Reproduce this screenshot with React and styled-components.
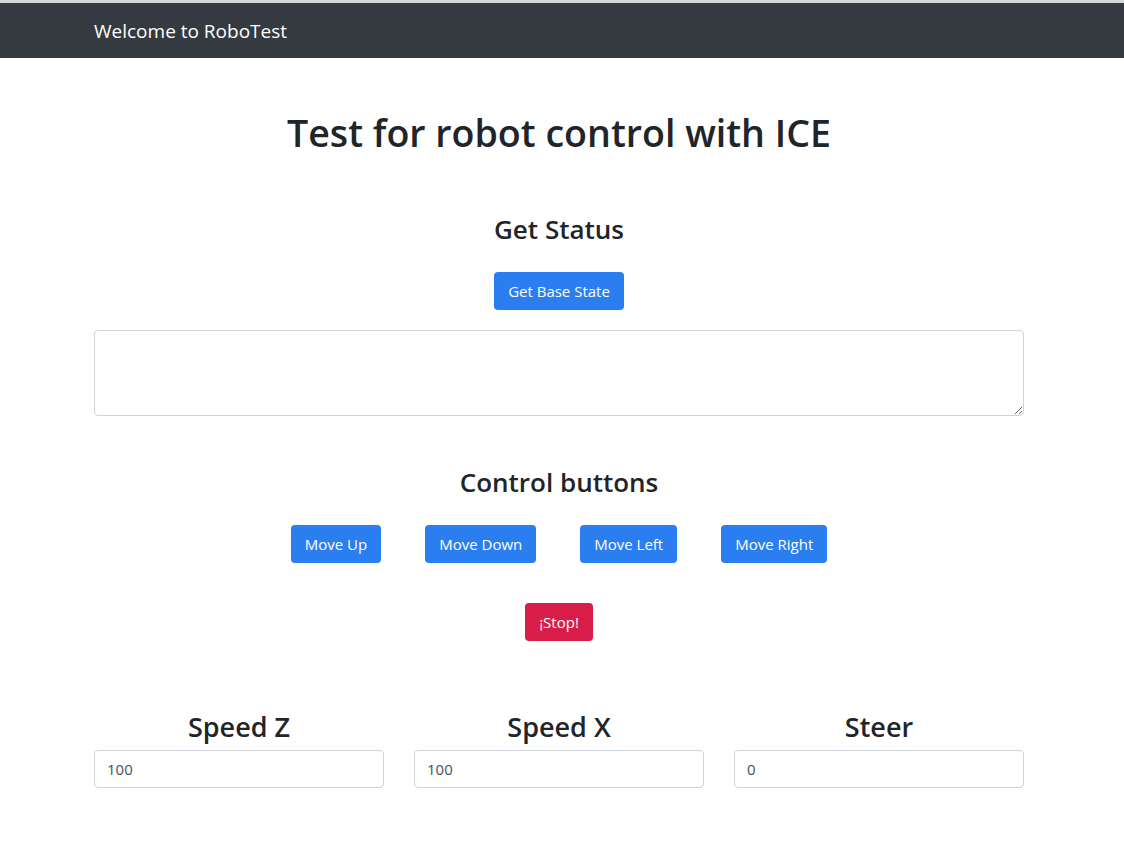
import React from "react";
import styled, { createGlobalStyle } from "styled-components";

const Global = createGlobalStyle`
  html, body { margin: 0; padding: 0; background: #fff; }
  body {
    font-family: "Open Sans", "Noto Sans", sans-serif;
    color: #212529;
    font-size: 16px;
    line-height: 1.5;
  }
  * { box-sizing: border-box; }
`;

const Navbar = styled.nav`
  background: #343a40;
  border-top: 3px solid #d4d6d8;
  height: 58px;
  display: flex;
  align-items: center;
`;

const Container = styled.div`
  width: 930px;
  margin: 0 calc(50% - 462px) 0 calc(50% - 468px);
`;

const Brand = styled.span`
  color: #fff;
  font-size: 19px;
  line-height: 30px;
`;

const Main = styled(Container)`
  padding-top: 51px;
  padding-bottom: 60px;
  display: flex;
  flex-direction: column;
  align-items: center;
`;

const Title = styled.h1`
  margin: 0;
  font-size: 37.6px;
  font-weight: 600;
  line-height: 48px;
  text-align: center;
`;

const Heading = styled.h3`
  margin: ${(p) => p.$mt || 0}px 0 0;
  font-size: ${(p) => p.$size || 26}px;
  font-weight: 600;
  line-height: 34px;
  text-align: center;
`;

const Button = styled.button`
  font-family: inherit;
  font-size: 15px;
  line-height: 24px;
  padding: 7px 14px;
  height: 38px;
  border: none;
  border-radius: 4px;
  color: #fff;
  background: ${(p) => (p.$danger ? "#d81e48" : "#2b7ef0")};
  margin-top: ${(p) => p.$mt || 0}px;
  cursor: pointer;
`;

const TextArea = styled.textarea`
  display: block;
  width: 100%;
  height: 86px;
  margin-top: 20px;
  border: 1px solid #ced4da;
  border-radius: 4px;
  font-family: inherit;
  font-size: 16px;
  padding: 6px 12px;
  resize: vertical;
`;

const ButtonRow = styled.div`
  display: flex;
  justify-content: center;
  gap: 44px;
  margin-top: 26px;
`;

const Columns = styled.div`
  display: grid;
  grid-template-columns: repeat(3, 1fr);
  gap: 30px;
  width: 100%;
  margin-top: 69px;
`;

const Column = styled.div`
  display: flex;
  flex-direction: column;
  gap: 6px;
`;

const Input = styled.input`
  display: block;
  width: 100%;
  height: 38px;
  border: 1px solid #ced4da;
  border-radius: 4px;
  font-family: inherit;
  font-size: 15px;
  color: #495057;
  padding: 6px 12px;
`;

const controls = ["Move Up", "Move Down", "Move Left", "Move Right"];
const fields = [
  ["Speed Z", "100"],
  ["Speed X", "100"],
  ["Steer", "0"],
];

export default function App() {
  return (
    <>
      <Global />
      <Navbar>
        <Container>
          <Brand>Welcome to RoboTest</Brand>
        </Container>
      </Navbar>
      <Main>
        <Title>Test for robot control with ICE</Title>
        <Heading $mt={55}>Get Status</Heading>
        <Button $mt={26}>Get Base State</Button>
        <TextArea />
        <Heading $mt={49}>Control buttons</Heading>
        <ButtonRow>
          {controls.map((c) => (
            <Button key={c}>{c}</Button>
          ))}
        </ButtonRow>
        <Button $danger $mt={40}>¡Stop!</Button>
        <Columns>
          {fields.map(([label, val]) => (
            <Column key={label}>
              <Heading $size={27}>{label}</Heading>
              <Input defaultValue={val} />
            </Column>
          ))}
        </Columns>
      </Main>
    </>
  );
}
